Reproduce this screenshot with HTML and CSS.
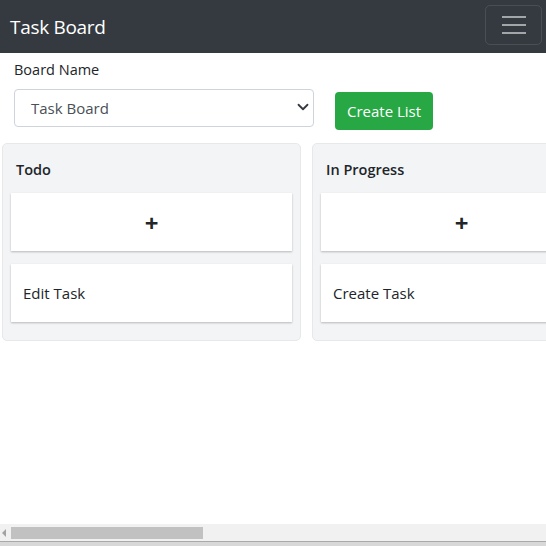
FILE: index.html
```html
<!DOCTYPE html>
<html>
<head>
<meta charset="utf-8">
<link rel="stylesheet" href="styles.css">
</head>
<body>
<nav class="navbar">
  <span class="brand">Task Board</span>
  <button class="toggler"><span class="bar"></span><span class="bar"></span><span class="bar"></span></button>
</nav>
<section class="controls">
  <label class="label">Board Name</label>
  <div class="row">
    <div class="select">
      <span>Task Board</span>
      <svg class="chev" width="12" height="12" viewBox="0 0 16 16"><path d="M2 5l6 6 6-6" fill="none" stroke="#343a40" stroke-width="2.4" stroke-linecap="round" stroke-linejoin="round"/></svg>
    </div>
    <button class="btn">Create List</button>
  </div>
</section>
<div class="board">
  <div class="lists">
    <div class="list">
      <div class="list-title">Todo</div>
      <div class="card add">+</div>
      <div class="card">Edit Task</div>
    </div>
    <div class="list">
      <div class="list-title">In Progress</div>
      <div class="card add">+</div>
      <div class="card">Create Task</div>
    </div>
  </div>
</div>
<div class="hscroll">
  <span class="arrow"></span>
  <span class="thumb"></span>
</div>
<div class="foot"></div>
</body>
</html>
```
FILE: styles.css
```css
* { box-sizing: border-box; }
html, body { margin: 0; height: 546px; overflow: hidden; }
body { font-family: "Open Sans", "Noto Sans", sans-serif; color: #212529; font-size: 15px; background: #fff; }
.navbar { height: 53px; background: #343a40; display: flex; align-items: center; justify-content: space-between; padding: 0 4px 0 10px; }
.brand { color: #fff; font-size: 19px; letter-spacing: -0.3px; }
.toggler { width: 57px; height: 40px; margin-top: -4px; background: transparent; border: 1px solid rgba(255,255,255,.1); border-radius: 5px; display: flex; flex-direction: column; justify-content: center; align-items: center; gap: 6px; padding: 0; }
.bar { display: block; width: 24px; height: 2px; background: rgba(255,255,255,.55); }
.controls { padding: 7px 14px 0 14px; }
.label { display: block; font-size: 14.5px; line-height: 20px; margin-bottom: 9px; }
.row { display: flex; align-items: flex-start; gap: 21px; }
.select { width: 300px; height: 38px; border: 1px solid #ced4da; border-radius: 4px; display: flex; align-items: center; justify-content: space-between; padding: 0 4px 0 16px; font-size: 15px; color: #495057; }
.chev { margin-top: -2px; }
.btn { margin-top: 3px; height: 38px; padding: 0 12px; background: #28a745; color: #fff; border: none; border-radius: 4px; font-family: inherit; font-size: 15px; }
.board { margin-top: 13px; height: 381px; overflow: hidden; padding-left: 2px; }
.lists { display: flex; gap: 11px; align-items: flex-start; width: 1490px; }
.list { width: 299px; flex: none; background: #f3f4f6; border: 1px solid #e7e8ea; border-radius: 5px; padding: 0 8px 18px 8px; }
.list-title { font-weight: 600; font-size: 14.5px; padding: 15px 5px 12px; line-height: 22px; }
.card { background: #fff; height: 58px; display: flex; align-items: center; padding: 0 12px; box-shadow: 0 1px 2px rgba(0,0,0,.25); font-size: 15px; }
.card + .card { margin-top: 13px; }
.card.add { justify-content: center; font-weight: 700; font-size: 24px; }
.hscroll { height: 17px; background: #f1f1f1; display: flex; align-items: center; }
.arrow { width: 0; height: 0; margin-left: 2px; border-top: 4px solid transparent; border-bottom: 4px solid transparent; border-right: 4px solid #a3a3a3; }
.thumb { margin-left: 5px; width: 192px; height: 12px; background: #c1c1c1; }
.foot { height: 5px; border-top: 1px solid #a9a9a9; background: #d8d8d8; }
```
